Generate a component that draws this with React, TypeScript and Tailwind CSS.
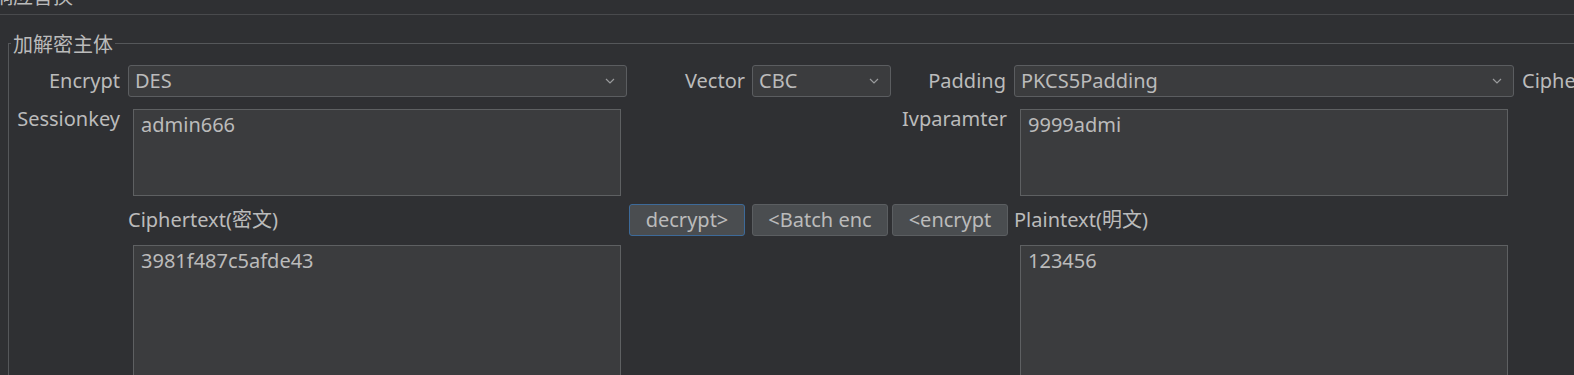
const font = { fontFamily: '"Noto Sans", "Noto Sans CJK SC", sans-serif' };

function Chevron() {
  return (
    <svg width="10" height="6" viewBox="0 0 10 6" className="shrink-0">
      <path d="M1 1 L5 5 L9 1" fill="none" stroke="#9a9b9d" strokeWidth="1.2" />
    </svg>
  );
}

function Combo({ value, width }: { value: string; width: string }) {
  return (
    <div
      className={`${width} h-[32px] shrink-0 flex items-center justify-between pl-[6px] pr-[11px] bg-[#3b3c3e] border border-[#5b5d60] rounded-[3px]`}
    >
      <span className="leading-[24px]">{value}</span>
      <Chevron />
    </div>
  );
}

function TextBox({ value, height }: { value: string; height: string }) {
  return (
    <div
      className={`w-[488px] ${height} shrink-0 bg-[#3b3c3e] border border-[#5e6062] pt-[3px] pl-[7px] leading-[24px]`}
    >
      {value}
    </div>
  );
}

function Btn({ label, width, focused }: { label: string; width: string; focused?: boolean }) {
  return (
    <button
      className={`${width} h-[32px] shrink-0 rounded-[3px] bg-[#4a4d50] border text-center leading-[24px] ${
        focused ? 'border-[#3d6a99]' : 'border-[#5b5e61]'
      }`}
    >
      {label}
    </button>
  );
}

export default function App() {
  return (
    <div
      className="w-[1574px] h-[375px] overflow-hidden bg-[#2f3033] text-[#bbbbbb] text-[20px]"
      style={font}
    >
      {/* panel title, scrolled off the top */}
      <div className="h-[15px] overflow-hidden border-b border-[#494a4d]">
        <div className="-mt-[13px] -ml-[7px] leading-[20px] whitespace-nowrap">响应替换</div>
      </div>

      <div className="pl-[8px] pt-[14px]">
        <fieldset className="w-[1620px] h-[400px] border-l border-t border-[#55575a]">
          <legend className="ml-[2px] px-[2px] leading-[28px]">
            <span className="relative top-[2px]">加解密主体</span>
          </legend>

          {/* row 1: combos */}
          <div className="flex items-center mt-[8px] whitespace-nowrap">
            <span className="w-[111px] shrink-0 text-right leading-[24px]">Encrypt</span>
            <div className="ml-[8px]">
              <Combo value="DES" width="w-[499px]" />
            </div>
            <span className="w-[118px] shrink-0 text-right leading-[24px]">Vector</span>
            <div className="ml-[7px]">
              <Combo value="CBC" width="w-[139px]" />
            </div>
            <span className="w-[115px] shrink-0 text-right leading-[24px]">Padding</span>
            <div className="ml-[8px]">
              <Combo value="PKCS5Padding" width="w-[500px]" />
            </div>
            <span className="ml-[8px] leading-[24px]">Ciphertext</span>
          </div>

          {/* row 2: key / iv */}
          <div className="flex items-start mt-[12px] whitespace-nowrap">
            <span className="w-[111px] shrink-0 text-right leading-[20px]">Sessionkey</span>
            <div className="ml-[13px]">
              <TextBox value="admin666" height="h-[87px]" />
            </div>
            <span className="w-[386px] shrink-0 text-right leading-[20px]">Ivparamter</span>
            <div className="ml-[13px]">
              <TextBox value="9999admi" height="h-[87px]" />
            </div>
          </div>

          {/* row 3: labels and actions */}
          <div className="flex items-center mt-[8px] whitespace-nowrap">
            <span className="ml-[119px] w-[501px] shrink-0 leading-[24px]">Ciphertext(密文)</span>
            <Btn label="decrypt>" width="w-[116px]" focused />
            <div className="ml-[7px]">
              <Btn label="<Batch enc" width="w-[136px]" />
            </div>
            <div className="ml-[4px]">
              <Btn label="<encrypt" width="w-[116px]" />
            </div>
            <span className="ml-[6px] leading-[24px]">Plaintext(明文)</span>
          </div>

          {/* row 4: cipher / plain text areas */}
          <div className="flex items-start mt-[9px] whitespace-nowrap">
            <div className="ml-[124px]">
              <TextBox value="3981f487c5afde43" height="h-[200px]" />
            </div>
            <div className="ml-[399px]">
              <TextBox value="123456" height="h-[200px]" />
            </div>
          </div>
        </fieldset>
      </div>
    </div>
  );
}
